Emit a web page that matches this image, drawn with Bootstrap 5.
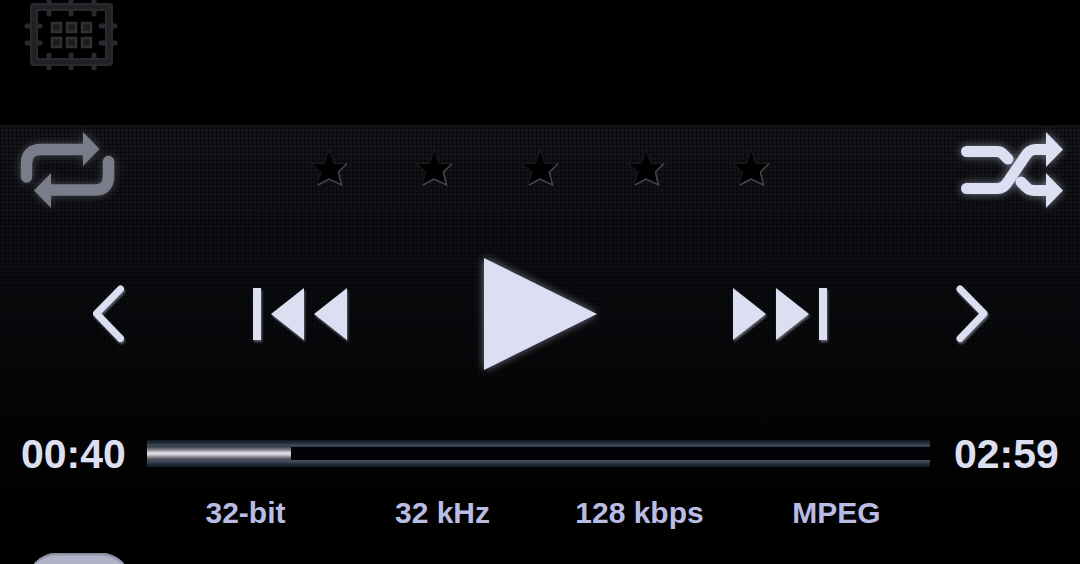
<!DOCTYPE html>
<html lang="en">
<head>
<meta charset="utf-8">
<meta name="viewport" content="width=device-width, initial-scale=1">
<title>Player</title>
<link href="https://cdn.jsdelivr.net/npm/bootstrap@5.3.0/dist/css/bootstrap.min.css" rel="stylesheet">
<style>
  body { background: #000; color: #dcdff2; font-family: "Liberation Sans", Arial, sans-serif; font-weight: 700; }
  button { background: none; border: 0; padding: 0; color: inherit; line-height: 0; }
  svg { display: block; }
  .top-strip { height: 125px; padding-left: 20px; }
  .player {
    background:
      repeating-linear-gradient(90deg, rgba(0,0,0,.4) 0 1px, transparent 1px 4px),
      repeating-linear-gradient(0deg, rgba(0,0,0,.4) 0 1px, transparent 1px 4px),
      linear-gradient(#14151a, #0b0c10 38%, #030304 75%, #000 92%);
    padding-bottom: 20px;
  }
  .modes { height: 90px; padding: 0 12px 0 16px; }
  .rating { width: 528px; }
  .glow { filter: drop-shadow(0 0 4px rgba(205,208,235,.55)); }
  .edge { filter: drop-shadow(1px 2px 1px rgba(190,192,210,.5)); }
  .off { color: #7b7c8a; }
  .off .glow { filter: drop-shadow(0 0 4px rgba(140,142,165,.45)); }
  .transport { display: grid; grid-template-columns: 9fr 7fr 13fr 7fr 9fr; height: 198px; justify-items: center; align-items: center; }
  .timeline { display: grid; grid-template-columns: 147px 1fr 150px; align-items: center; height: 80px; }
  .clock { font-size: 41px; line-height: 44px; padding-top: 2px; }
  .clock-now { padding-left: 21px; }
  .clock-end { padding-left: 24px; }
  .seek {
    appearance: none; -webkit-appearance: none; width: 100%; height: 27px; margin: 0; display: block;
    background:
      linear-gradient(#44444b, #8f8e97 25%, #e2e0e8 45%, #dcdae2 55%, #85848d 78%, #3c3d45) 0 7px / var(--played) 13px no-repeat,
      linear-gradient(#101823, #222e3c 3px, #465161 6px, #202832 7px, #020306 7px, #020306 20px, #465161 20px, #3a4452 22px, #222d3b 24px, #101823);
  }
  .seek::-webkit-slider-thumb { -webkit-appearance: none; width: 1px; height: 27px; background: transparent; }
  .format { color: #b9bce4; font-size: 30px; line-height: 40px; padding: 0 145px 0 147px; }
  .dock { min-height: 0; padding-left: 28px; }
  .dock-key { width: 102px; height: 80px; border-radius: 28px; background: #b1b3c8; box-shadow: inset 0 2px 2px #85879a; }
</style>
</head>
<body class="vh-100 overflow-hidden d-flex flex-column">
<header class="top-strip flex-shrink-0">
  <button type="button" aria-label="Visualizer">
    <svg width="102" height="76" viewBox="20 0 102 76" fill="none">
      <g stroke="#2a2a2e" stroke-linecap="round" stroke-linejoin="round">
        <rect x="34" y="7" width="75" height="55" stroke-width="8"/>
        <path d="M49-4V14M71-4V14M94-4V14M49 55V68M71 55V68M94 55V68M27 26H40M27 43H40M101 26H115M101 43H115" stroke-width="5"/>
      </g>
      <rect x="34" y="7" width="75" height="55" rx="2" stroke="#212125" stroke-width="4"/>
      <g fill="#1d1d20" stroke="#303035" stroke-width="2.500">
        <path d="M52 23h9v9h-9zM67 23h9v9h-9zM82 23h9v9h-9zM52 38h9v9h-9zM67 38h9v9h-9zM82 38h9v9h-9z"/>
      </g>
    </svg>
  </button>
</header>

<main class="player flex-shrink-0">
  <div class="modes d-flex justify-content-between align-items-center">
    <button type="button" class="off" aria-label="Repeat">
      <svg class="glow" width="108" height="84" viewBox="16 128 108 84">
        <path d="M26.500 177V163Q27 149.500 41 149.500H84M108.500 161.500V177Q108 190 95 190H50" fill="none" stroke="currentColor" stroke-width="11.500" stroke-linecap="round"/>
        <path d="M83 132L99.500 149L83 166ZM51 173L34 190.500L51 208Z" fill="currentColor"/>
      </svg>
    </button>
    <div class="rating row g-0" role="group" aria-label="Rating">
      <div class="col d-flex justify-content-center"><button type="button" aria-label="1 star"><svg width="42" height="42" viewBox="0 0 42 42"><use href="#star"/></svg></button></div>
      <div class="col d-flex justify-content-center"><button type="button" aria-label="2 stars"><svg width="42" height="42" viewBox="0 0 42 42"><use href="#star"/></svg></button></div>
      <div class="col d-flex justify-content-center"><button type="button" aria-label="3 stars"><svg width="42" height="42" viewBox="0 0 42 42"><use href="#star"/></svg></button></div>
      <div class="col d-flex justify-content-center"><button type="button" aria-label="4 stars"><svg width="42" height="42" viewBox="0 0 42 42"><use href="#star"/></svg></button></div>
      <div class="col d-flex justify-content-center"><button type="button" aria-label="5 stars"><svg width="42" height="42" viewBox="0 0 42 42"><use href="#star"/></svg></button></div>
    </div>
    <button type="button" aria-label="Shuffle">
      <svg class="glow" width="112" height="84" viewBox="956 128 112 84">
        <path d="M966.500 151.500H997Q1001 151.500 1004 155L1008 159M966.500 188.500H998Q1003 188.500 1007 183L1024 158Q1029 149.500 1035 149.500H1047M1021 182L1026 187Q1029 190.500 1034 190.500H1047" fill="none" stroke="currentColor" stroke-width="11" stroke-linecap="round" stroke-linejoin="round"/>
        <path d="M1046 132L1063 149.500L1046 167ZM1046 173L1063 190.500L1046 208Z" fill="currentColor"/>
      </svg>
    </button>
  </div>

  <div class="transport">
    <button type="button" aria-label="Previous list">
      <svg class="edge" width="40" height="64" viewBox="88 282 40 64"><path d="M120.500 289L96.500 313.500L120.500 338.500" fill="none" stroke="currentColor" stroke-width="7" stroke-linecap="round" stroke-linejoin="round"/></svg>
    </button>
    <button type="button" aria-label="Previous track">
      <svg class="edge" width="104" height="64" viewBox="248 282 104 64"><path d="M253 288H261V340H253ZM304 288V340L271 314ZM347 288V340L314 314Z" fill="currentColor"/></svg>
    </button>
    <button type="button" aria-label="Play">
      <svg class="glow" width="128" height="128" viewBox="476 250 128 128"><path d="M484 258L597 314L484 370Z" fill="currentColor"/></svg>
    </button>
    <button type="button" aria-label="Next track">
      <svg class="edge" width="104" height="64" viewBox="728 282 104 64"><path d="M733 288V340L766 314ZM776 288V340L809 314ZM819 288H827V340H819Z" fill="currentColor"/></svg>
    </button>
    <button type="button" aria-label="Next list">
      <svg class="edge" width="40" height="64" viewBox="952 282 40 64"><path d="M960 289L984 313.500L960 338.500" fill="none" stroke="currentColor" stroke-width="7" stroke-linecap="round" stroke-linejoin="round"/></svg>
    </button>
  </div>

  <div class="timeline">
    <span class="clock clock-now">00:40</span>
    <input class="seek" type="range" min="0" max="179" value="33" aria-label="Seek" style="--played: 18.4%">
    <span class="clock clock-end">02:59</span>
  </div>

  <div class="format">
    <div class="row g-0 text-center">
      <div class="col">32-bit</div>
      <div class="col">32 kHz</div>
      <div class="col">128 kbps</div>
      <div class="col">MPEG</div>
    </div>
  </div>
</main>

<footer class="dock flex-fill overflow-hidden">
  <button type="button" class="dock-key" aria-label="Library"></button>
</footer>

<svg class="position-absolute" width="0" height="0" aria-hidden="true">
  <defs>
    <g id="star">
      <path d="M21 1L26 14.500H39L30 23L33.500 36L21 30L9 36L13 23L3 14.500H16.500Z" fill="#000" stroke="#1b1c21"/>
      <path d="M39 14.500L30.500 23L33.500 36L21 30L10 36" fill="none" stroke="#45464d" stroke-width="1.500"/>
    </g>
  </defs>
</svg>
<script src="https://cdn.jsdelivr.net/npm/bootstrap@5.3.0/dist/js/bootstrap.bundle.min.js"></script>
</body>
</html>
